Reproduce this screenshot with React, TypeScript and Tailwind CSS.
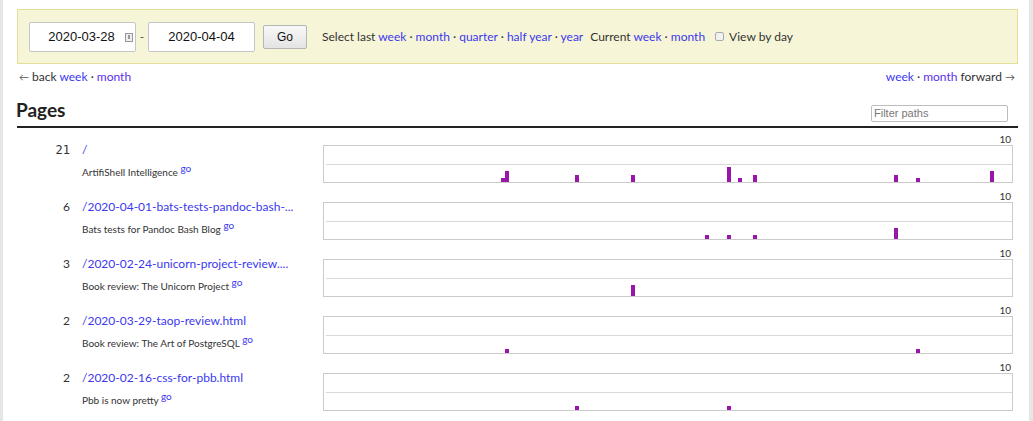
import React from "react";

type Bar = [number, number];
type Row = { count: string; mono?: boolean; path: string; title: string; bars: Bar[] };

const rows: Row[] = [
  { count: "21", mono: true, path: "/", title: "ArtifiShell Intelligence", bars: [[500, 4], [504, 11], [574, 7], [630, 7], [726, 15], [737, 4], [752, 7], [893, 7], [915, 4], [989, 11]] },
  { count: "6", path: "/2020-04-01-bats-tests-pandoc-bash-...", title: "Bats tests for Pandoc Bash Blog", bars: [[704, 4], [726, 4], [752, 4], [893, 11]] },
  { count: "3", path: "/2020-02-24-unicorn-project-review....", title: "Book review: The Unicorn Project", bars: [[630, 11]] },
  { count: "2", path: "/2020-03-29-taop-review.html", title: "Book review: The Art of PostgreSQL", bars: [[504, 4], [915, 4]] },
  { count: "2", path: "/2020-02-16-css-for-pbb.html", title: "Pbb is now pretty", bars: [[574, 4], [726, 4]] },
];

function Chart({ bars }: { bars: Bar[] }) {
  return (
    <div className="w-[690px] h-[38px] border border-[#cbcbcb] bg-white">
      <svg width="688" height="36" className="block">
        <line x1="2" y1="18.5" x2="688" y2="18.5" stroke="#d9d9d9" strokeWidth="1" />
        {bars.map(([x, h], i) => (
          <rect key={i} x={x - 323} y={36 - h} width="4" height={h} fill="#9a16a8" />
        ))}
      </svg>
    </div>
  );
}

const L = "text-[#3b38ee]";
const SANS = "font-[family-name:Liberation_Sans,Arial,sans-serif]";

export default function App() {
  return (
    <div className="flex bg-[#e6e6e6] w-[1033px] h-[421px] overflow-hidden font-[family-name:Lato,sans-serif] text-[#333]">
      <div className="ml-[3px] w-[1026px] bg-white pl-[14px] pr-[11px] pt-[9px]">
        {/* filter box */}
        <div className="h-[55px] border border-[#e3de98] bg-[#f7f5d8] pl-[11px] flex items-center text-[12px]">
          <div className={`relative w-[107px] h-[30px] bg-white border border-[#c6c6c6] rounded-[2px] flex items-center justify-center ${SANS} text-[13px] text-[#111]`}>
            <span className="-ml-[2px]">2020-03-28</span>
            <span className="absolute left-[95px] top-[10px] w-[8px] h-[9px] border border-[#999] bg-[#eee] flex items-center justify-center">
              <span className="w-[2px] h-[4px] bg-[#999]" />
            </span>
          </div>
          <span className="w-[12px] text-center text-[#555]">-</span>
          <div className={`w-[107px] h-[30px] bg-white border border-[#c6c6c6] rounded-[2px] flex items-center justify-center ${SANS} text-[13px] text-[#111]`}>
            2020-04-04
          </div>
          <div className={`ml-[8px] w-[44px] h-[24px] border border-[#b5b5b5] rounded-[2px] bg-gradient-to-b from-[#f8f8f8] to-[#e4e4e4] flex items-center justify-center ${SANS} text-[12px] text-[#111]`}>
            Go
          </div>
          <span className="ml-[15px]">
            Select last <span className={L}>week</span> · <span className={L}>month</span> · <span className={L}>quarter</span> · <span className={L}>half year</span> · <span className={L}>year</span>
          </span>
          <span className="ml-[7px]">
            Current <span className={L}>week</span> · <span className={L}>month</span>
          </span>
          <span className="ml-[10px] w-[9px] h-[9px] border border-[#aaa] rounded-[2px] bg-[#f2f2f2]" />
          <span className="ml-[5px]">View by day</span>
        </div>

        {/* nav row */}
        <div className="flex justify-between items-center h-[25px] text-[12px] pl-[2px] pr-[3px]">
          <span>
            <span className="text-[10px] text-[#555]">←</span> back <span className={L}>week</span> · <span className="text-[#5b2ef0]">month</span>
          </span>
          <span>
            <span className={L}>week</span> · <span className="text-[#5b2ef0]">month</span> forward <span className="text-[10px] text-[#555]">→</span>
          </span>
        </div>

        {/* heading */}
        <div className="mt-[6px] flex items-end justify-between border-b-[2px] border-[#222] h-[33px] pb-[4px]">
          <span className="text-[19px] font-bold leading-[24px] text-[#222] -ml-[1px]">Pages</span>
          <div className={`mr-[10px] w-[137px] h-[17px] border border-[#bdbdbd] rounded-[2px] bg-white flex items-center pl-[2px] ${SANS} text-[11px] text-[#777]`}>
            Filter paths
          </div>
        </div>

        {/* rows */}
        <div className="pt-[5px]">
          {rows.map((r, i) => (
            <div key={i} className="flex h-[57px]">
              <div className="w-[306px] flex">
                <div className={`w-[53px] text-right pt-[9px] leading-[16px] ${r.mono ? "font-[family-name:DejaVu_Sans_Mono,monospace] text-[12px]" : "text-[12px]"}`}>
                  {r.count}
                </div>
                <div className="ml-[12px] pt-[9px]">
                  <div className={`text-[12px] leading-[16px] ${L}`}>{r.path}</div>
                  <div className="mt-[7px] text-[10px] leading-[14px] text-[#333]">
                    {r.title} <span className={`text-[10px] ${L} relative -top-[4px]`}>go</span>
                  </div>
                </div>
              </div>
              <div className="flex flex-col items-end">
                <div className="text-[10px] leading-[12px] text-[#333] pr-[2px]">10</div>
                <Chart bars={r.bars} />
              </div>
            </div>
          ))}
          <div className="flex h-[57px] justify-end">
            <div className="text-[10px] leading-[12px] text-[#333] pr-[2px]">10</div>
          </div>
        </div>
      </div>
    </div>
  );
}
